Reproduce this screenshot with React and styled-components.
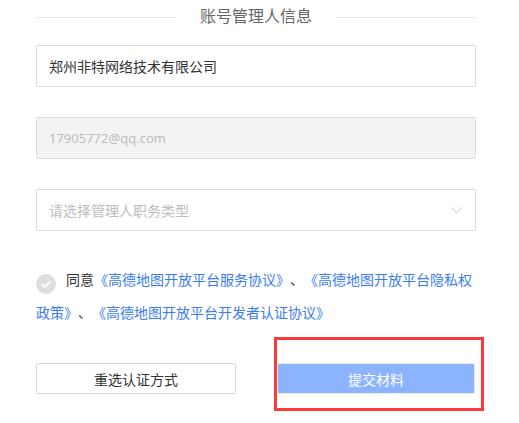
import React from "react";
import styled, { createGlobalStyle } from "styled-components";

const GlobalStyle = createGlobalStyle`
    html, body {
        margin: 0;
        padding: 0;
        background: #fff;
    }
    body {
        min-height: 423px;
        font-family: "Noto Sans", "Noto Sans CJK SC", sans-serif;
        color: #333;
        text-spacing-trim: space-all;
    }
`;

export default function App() {
    return (
        <>
            <GlobalStyle />
            <FormStyled>
                <SectionTitle>
                    <span className="line" />
                    <span className="text">账号管理人信息</span>
                    <span className="line" />
                </SectionTitle>

                <Field>郑州非特网络技术有限公司</Field>
                <Field $disabled>17905772@qq.com</Field>
                <Field $placeholder>
                    请选择管理人职务类型
                    <svg width="11" height="7" viewBox="0 0 11 7">
                        <polyline
                            points="0.5,0.5 5.5,6 10.5,0.5"
                            fill="none"
                            stroke="#c9c9c9"
                            strokeWidth="1"
                        />
                    </svg>
                </Field>

                <Agreement>
                    <CheckCircle>
                        <svg width="12" height="10" viewBox="0 0 12 10">
                            <polyline
                                points="1.5,5 4.8,8 10.5,2"
                                fill="none"
                                stroke="#fff"
                                strokeWidth="1.8"
                            />
                        </svg>
                    </CheckCircle>
                    同意<Link>《高德地图开放平台服务协议》</Link>
                    <Sep>、</Sep>
                    <Link>《高德地图开放平台隐私权政策》</Link>
                    <Sep>、</Sep>
                    <Link>《高德地图开放平台开发者认证协议》</Link>
                </Agreement>

                <ButtonRow>
                    <Button>重选认证方式</Button>
                    <Highlight>
                        <Button $primary>提交材料</Button>
                    </Highlight>
                </ButtonRow>
            </FormStyled>
        </>
    );
}

const FormStyled = styled.div`
    width: 440px;
    margin-left: 36px;
    padding-bottom: 29px;
    display: flex;
    flex-direction: column;
`;

const SectionTitle = styled.div`
    height: 34px;
    display: flex;
    align-items: center;

    .line {
        flex: 1;
        height: 1px;
        background: #e6e6e6;
    }
    .text {
        padding: 0 24px;
        font-size: 16px;
        line-height: 34px;
        color: #666;
        margin-top: -2px;
    }
`;

const Field = styled.div`
    box-sizing: border-box;
    height: 42px;
    margin-top: ${(p) => (p.$disabled || p.$placeholder ? "30px" : "11px")};
    padding: 0 12px;
    display: flex;
    align-items: center;
    justify-content: space-between;
    border: 1px solid #dcdcdc;
    border-radius: 2px;
    font-size: ${(p) => (p.$disabled ? "13px" : "14px")};
    background: ${(p) => (p.$disabled ? "#f3f3f3" : "#fff")};
    color: ${(p) => (p.$disabled || p.$placeholder ? "#bdbdbd" : "#333")};

    svg {
        margin-right: 1px;
    }
`;

const Agreement = styled.p`
    margin: 32px 0 0;
    font-size: 14px;
    line-height: 33px;
    color: #333;
    text-spacing-trim: space-all;
`;

const CheckCircle = styled.span`
    display: inline-flex;
    align-items: center;
    justify-content: center;
    width: 20px;
    height: 20px;
    border-radius: 50%;
    background: #dedede;
    margin-right: 10px;
    vertical-align: -4px;
`;

const Link = styled.span`
    color: #3b7cf4;
`;

const Sep = styled.span`
    color: #555;
`;

const ButtonRow = styled.div`
    margin-top: 34px;
    display: grid;
    grid-template-columns: 200px 198px;
    column-gap: 41px;
`;

const Highlight = styled.div`
    position: relative;

    &::after {
        content: "";
        position: absolute;
        top: -26px;
        left: -3px;
        right: -9px;
        bottom: -17px;
        border: 3px solid #fd3a3a;
        pointer-events: none;
    }
`;

const Button = styled.div`
    box-sizing: border-box;
    height: 31px;
    display: flex;
    align-items: center;
    justify-content: center;
    font-size: 14px;
    border-radius: 2px;
    border: 1px solid ${(p) => (p.$primary ? "#e6ecf7" : "#d9d9d9")};
    background: ${(p) => (p.$primary ? "#8cb3fe" : "#fff")};
    color: ${(p) => (p.$primary ? "#fff" : "#333")};
`;
